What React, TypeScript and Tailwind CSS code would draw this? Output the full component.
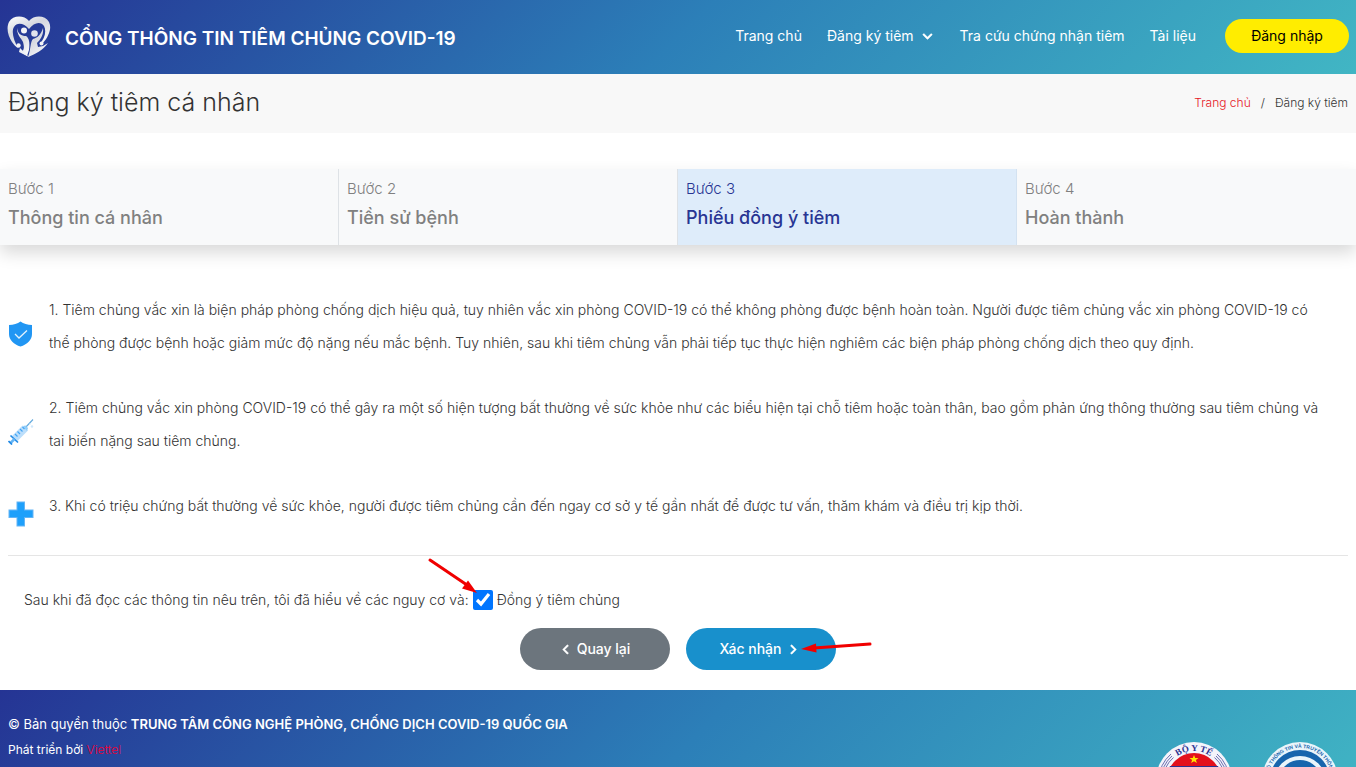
import { useState } from "react";
import type { ReactNode } from "react";
import { FaChevronDown, FaChevronLeft, FaChevronRight } from "react-icons/fa";

const STEPS = ["Thông tin cá nhân", "Tiền sử bệnh", "Phiếu đồng ý tiêm", "Hoàn thành"];
const CURRENT_STEP = 2;

const gradient = "bg-[linear-gradient(135deg,#253494,#2c7fb8,#41b6c4)]";
const chevron = "size-[11px] stroke-current stroke-[20px]";

function HeartLogo() {
  return (
    <svg viewBox="0 0 44 42" className="h-[42px] w-11 shrink-0" aria-hidden="true">
      <defs>
        <linearGradient id="silver" x1="0" y1="0" x2="0.6" y2="1">
          <stop offset="0" stopColor="#ffffff" />
          <stop offset="0.45" stopColor="#d5d8e0" />
          <stop offset="1" stopColor="#f6f7fa" />
        </linearGradient>
      </defs>
      <path
        fill="url(#silver)"
        d="M22 5C17-1 6-1 2 6C-1 12 1 20 5 26C7 29 9 31 11 32C7 25 4 16 7 11C10 6 17 7 22 13C27 6 34 5 37 10C40 16 37 23 33 28L36 27C42 20 45 12 42 6C38-1 27-1 22 5Z"
      />
      <circle cx="17" cy="14.500" r="3" fill="#f2f3f7" />
      <circle cx="27.500" cy="17.500" r="3.300" fill="#e1e4ed" />
      <path fill="url(#silver)" d="M10 12C11 18 14 20 19 20C22 22 23 26 22 34L20 40L14 36C18 34 17 30 16 26C14 22 10 19 10 12Z" />
      <path fill="url(#silver)" d="M36 12C34 19 30 22 26 23C23 26 24 33 21 41C29 38 36 34 41 27L36 30L31 31L30 27C33 24 37 19 36 12Z" />
      <circle cx="11.500" cy="29.500" r="2.200" fill="#f2f3f7" />
      <circle cx="34.500" cy="27.500" r="2" fill="#f2f3f7" />
      <path fill="#eef0f5" d="M13 32L22 41L12 36Z" />
    </svg>
  );
}

function ShieldIcon() {
  return (
    <svg viewBox="0 0 25 26" className="h-[26px] w-[25px]" aria-hidden="true">
      <path fill="#2196f3" d="M12.500 0.500C15.500 3 19.500 3.800 24 4V13C24 19 19 23.500 12.500 25.500C6 23.500 1 19 1 13V4C5.500 3.800 9.500 3 12.500 0.500Z" />
      <path d="M7 13L11 17L19 9.500" fill="none" stroke="#e3f2fd" strokeWidth="1.300" />
    </svg>
  );
}

function SyringeIcon() {
  return (
    <svg viewBox="0 0 26 26" className="h-[26px] w-[26px]" aria-hidden="true">
      <path d="M17 9L25 0.500" stroke="#5fa8dc" strokeWidth="1.100" />
      <path fill="#bbdefb" d="M4 17L14.500 6.500L20 11.500L9.500 22Z" />
      <path fill="#90cdf9" d="M15 7L17.500 6.500L20 9L19 12Z" />
      <path d="M7 15L9.500 17.500M9.500 12.500L12 15M12 10L14.500 12.500M14.500 8L16.500 10" stroke="#42a5f5" strokeWidth="1.200" />
      <path d="M2.500 16.500L10 23.500" stroke="#1e88e5" strokeWidth="1.700" />
      <path d="M6.500 20L2.500 24" stroke="#64b5f6" strokeWidth="2.500" />
      <path d="M0.500 22L4 25.500" stroke="#1e88e5" strokeWidth="1.700" />
      <circle cx="24" cy="7.500" r="1.200" fill="#cfe8fc" />
      <circle cx="22" cy="5" r="0.700" fill="#cfe8fc" />
    </svg>
  );
}

function PlusIcon() {
  return (
    <svg viewBox="0 0 26 26" className="h-[26px] w-[26px]" aria-hidden="true">
      <path fill="#64b5f6" d="M8.500 0.500H17V8.500H25.500V17H17V25.500H8.500V17H0.500V8.500H8.500Z" />
      <path fill="#1ea0fb" d="M9.500 1.500H16V9.500H24.500V16H16V24.500H9.500V16H1.500V9.500H9.500Z" />
    </svg>
  );
}

function HealthBadge() {
  return (
    <svg viewBox="0 0 76 76" className="size-19" role="img" aria-label="Bộ Y tế">
      <defs>
        <path id="health-arc" d="M9 38A29 29 0 0 1 67 38" />
      </defs>
      <circle cx="38" cy="38" r="38" fill="#f4f4fb" />
      <g fill="none" stroke="#5b5ea6" strokeWidth="0.900">
        <path d="M3 38A35 35 0 0 1 15 12M5 38A33 33 0 0 1 16 14M7 38A31 31 0 0 1 17.500 15.500" />
        <path d="M73 38A35 35 0 0 0 61 12M71 38A33 33 0 0 0 60 14M69 38A31 31 0 0 0 58.500 15.500" />
      </g>
      <circle cx="38" cy="38" r="27" fill="#e3101c" />
      <path fill="#2b3190" d="M11 38A27 27 0 0 1 14 24H62A27 27 0 0 1 65 38Z" />
      <path fill="#ffe600" d="M38 13L39.200 16H42.500L39.900 18L40.900 21L38 19.200L35.100 21L36.100 18L33.500 16H36.800Z" />
      <text fill="#2b3190" fontSize="9" fontWeight="700" fontFamily="Liberation Serif, serif" textAnchor="middle">
        <textPath href="#health-arc" startOffset="50%">BỘ Y TẾ</textPath>
      </text>
    </svg>
  );
}

function MinistryBadge() {
  return (
    <svg viewBox="0 0 76 76" className="size-19" role="img" aria-label="Bộ Thông tin và Truyền thông">
      <defs>
        <path id="ministry-arc" d="M14 59A32 32 0 1 1 62 59" />
      </defs>
      <circle cx="38" cy="38" r="38" fill="#eaf5fb" />
      <circle cx="38" cy="38" r="30" fill="#1765ad" />
      <g fill="none" stroke="#eaf5fb" strokeWidth="4">
        <circle cx="38" cy="40" r="24" />
        <circle cx="38" cy="45" r="17" />
      </g>
      <text fill="#1765ad" fontSize="5" fontWeight="700" fontFamily="Liberation Sans, sans-serif" textAnchor="middle">
        <textPath href="#ministry-arc" startOffset="50%">BỘ THÔNG TIN VÀ TRUYỀN THÔNG</textPath>
      </text>
    </svg>
  );
}

function Notice({ icon, children }: { icon: ReactNode; children: ReactNode }) {
  return (
    <li className="flex items-center gap-[15px] pr-4">
      <div className="w-[26px] shrink-0 translate-y-2">{icon}</div>
      <p className="leading-[33px]">{children}</p>
    </li>
  );
}

export default function App() {
  const [agreed, setAgreed] = useState(true);

  return (
    <div className="min-h-screen bg-white font-['Inter',sans-serif] text-sm font-light text-[#333333]">
      <header className={`flex h-[74px] items-center justify-between px-[7px] text-white ${gradient}`}>
        <a href="#" className="flex items-center gap-[14px]">
          <HeartLogo />
          <span className="pt-1 text-[19px] font-semibold">CỔNG THÔNG TIN TIÊM CHỦNG COVID-19</span>
        </a>
        <nav className="flex items-center gap-[25px] pb-[2px] font-normal">
          <a href="#">Trang chủ</a>
          <button type="button" className="flex items-center gap-2 pr-[2px]">
            Đăng ký tiêm <FaChevronDown className={chevron} />
          </button>
          <a href="#">Tra cứu chứng nhận tiêm</a>
          <a href="#">Tài liệu</a>
          <button type="button" className="ml-1 h-[34px] w-[124px] rounded-full bg-[#ffed00] text-black">
            Đăng nhập
          </button>
        </nav>
      </header>

      <div className="flex h-[59px] items-center justify-between bg-[#f8f8f8] px-2 pb-[2px]">
        <h1 className="text-[25px]">Đăng ký tiêm cá nhân</h1>
        <nav className="flex gap-[10px] text-xs" aria-label="Breadcrumb">
          <a href="#" className="text-[#e6141e]">Trang chủ</a>
          <span>/</span>
          <span>Đăng ký tiêm</span>
        </nav>
      </div>

      <main>
        <ol className="mt-9 grid grid-cols-4 bg-[#f8f9fa] shadow-[0_8px_16px_rgba(0,0,0,0.15)]">
          {STEPS.map((title, i) => (
            <li
              key={title}
              className={`h-[76px] border-r px-2 pt-2 last:border-r-0 ${
                i === CURRENT_STEP ? "border-[#d3e2f1] bg-[#deecfa] text-[#283593]" : "border-[#dee2e6] text-[#808080]"
              }`}
            >
              <div className="text-[15px] leading-6">Bước {i + 1}</div>
              <div className="text-lg leading-[34px] font-medium">{title}</div>
            </li>
          ))}
        </ol>

        <div className="px-2 pt-12">
          <ul className="flex flex-col gap-8 border-b border-[#e5e5e5] pb-[33px]">
            <Notice icon={<ShieldIcon />}>
              1. Tiêm chủng vắc xin là biện pháp phòng chống dịch hiệu quả, tuy nhiên vắc xin phòng COVID-19 có thể không
              phòng được bệnh hoàn toàn. Người được tiêm chủng vắc xin phòng COVID-19 có thể phòng được bệnh hoặc giảm mức
              độ nặng nếu mắc bệnh. Tuy nhiên, sau khi tiêm chủng vẫn phải tiếp tục thực hiện nghiêm các biện pháp phòng
              chống dịch theo quy định.
            </Notice>
            <Notice icon={<SyringeIcon />}>
              2. Tiêm chủng vắc xin phòng COVID-19 có thể gây ra một số hiện tượng bất thường về sức khỏe như các biểu hiện
              tại chỗ tiêm hoặc toàn thân, bao gồm phản ứng thông thường sau tiêm chủng và tai biến nặng sau tiêm chủng.
            </Notice>
            <Notice icon={<PlusIcon />}>
              3. Khi có triệu chứng bất thường về sức khỏe, người được tiêm chủng cần đến ngay cơ sở y tế gần nhất để được
              tư vấn, thăm khám và điều trị kịp thời.
            </Notice>
          </ul>

          <div className="flex items-center gap-1 px-4 pt-8 leading-6">
            <span>Sau khi đã đọc các thông tin nêu trên, tôi đã hiểu về các nguy cơ và:</span>
            <span className="relative flex">
              <input
                id="agree"
                type="checkbox"
                checked={agreed}
                onChange={(e) => setAgreed(e.target.checked)}
                className="size-5 accent-[#0075ff]"
              />
              <svg viewBox="0 0 50 38" className="pointer-events-none absolute right-4 bottom-4 h-[38px] w-[50px]" aria-hidden="true">
                <path d="M3 4L40 29" stroke="#f00000" strokeWidth="3" strokeLinecap="round" />
                <path fill="#f00000" d="M50 37L35 32.500L41 24.500Z" />
              </svg>
            </span>
            <label htmlFor="agree">Đồng ý tiêm chủng</label>
          </div>

          <div className="flex justify-center gap-4 pt-4 pb-5 font-medium text-white">
            <button type="button" className="flex h-[42px] w-[150px] items-center justify-center gap-[6px] rounded-full bg-[#6c757d]">
              <FaChevronLeft className={chevron} /> Quay lại
            </button>
            <button
              type="button"
              className="relative flex h-[42px] w-[150px] items-center justify-center gap-[6px] rounded-full bg-[#1890cc] pr-1"
            >
              Xác nhận <FaChevronRight className={chevron} />
              <svg viewBox="0 0 72 14" className="pointer-events-none absolute top-3 -right-9 h-[14px] w-[72px]" aria-hidden="true">
                <path d="M14 8L70 4" stroke="#f00000" strokeWidth="3" strokeLinecap="round" />
                <path fill="#f00000" d="M1 9L16 3.500L16.500 12.500Z" />
              </svg>
            </button>
          </div>
        </div>
      </main>

      <footer className={`flex items-start justify-between px-2 text-[13px] font-normal text-white ${gradient}`}>
        <div className="flex flex-col gap-[2px] pt-[22px] pb-6">
          <p className="leading-6">
            © Bản quyền thuộc <strong className="font-semibold">TRUNG TÂM CÔNG NGHỆ PHÒNG, CHỐNG DỊCH COVID-19 QUỐC GIA</strong>
          </p>
          <p className="text-xs leading-6">
            Phát triển bởi <a href="#" className="font-light text-[#ee0033]">Viettel</a>
          </p>
        </div>
        <div className="flex gap-[30px] pt-[52px] pr-[10px]">
          <HealthBadge />
          <MinistryBadge />
        </div>
      </footer>
    </div>
  );
}
